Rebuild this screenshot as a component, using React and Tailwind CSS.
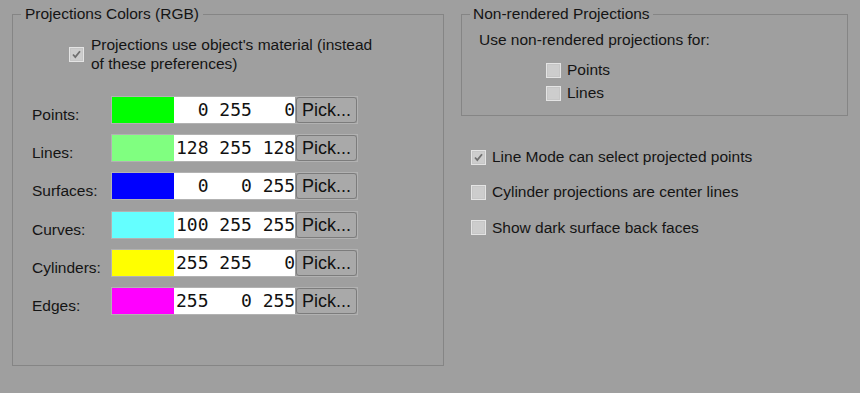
import React from 'react'

const colorRows = [
  { label: 'Points:', swatch: 'bg-[#00ff00]', value: '  0 255   0' },
  { label: 'Lines:', swatch: 'bg-[#80ff80]', value: '128 255 128' },
  { label: 'Surfaces:', swatch: 'bg-[#0000ff]', value: '  0   0 255' },
  { label: 'Curves:', swatch: 'bg-[#64ffff]', value: '100 255 255' },
  { label: 'Cylinders:', swatch: 'bg-[#ffff00]', value: '255 255   0' },
  { label: 'Edges:', swatch: 'bg-[#ff00ff]', value: '255   0 255' },
]

function CheckBox({ checked }) {
  return (
    <span className="flex h-[15px] w-[15px] shrink-0 items-center justify-center border border-[#e4e4e4] bg-[#c6c6c6]">
      <span className="flex h-[11px] w-[11px] items-center justify-center bg-[#cdcdcd]">
        {checked && (
          <svg viewBox="0 0 11 11" className="h-[11px] w-[11px]">
            <path d="M2 5.5 L4.3 8 L9 2.2" fill="none" stroke="#707070" strokeWidth="1.8" />
          </svg>
        )}
      </span>
    </span>
  )
}

function ColorRow({ row }) {
  return (
    <div className="flex h-[28px]">
      <div className="w-[98px] shrink-0 pt-[10px] pl-[19px] leading-[18px] whitespace-nowrap">{row.label}</div>
      <div className="flex border border-[#b2b2b2]">
        <div className={`w-[62px] ${row.swatch}`} />
        <div className="w-[121px] bg-white pl-[2px] font-['DejaVu_Sans_Mono',monospace] text-[18px] leading-[26px] whitespace-pre text-[#111]">
          {row.value}
        </div>
        <button
          type="button"
          className="ml-px w-[61px] rounded-[3px] border border-[#7c7c7c] bg-[#a9a9a9] text-[18px] leading-[22px] text-[#111]"
        >
          Pick...
        </button>
      </div>
    </div>
  )
}

export default function App() {
  return (
    <div className="flex h-[393px] w-[860px] gap-[17px] bg-[#9f9f9f] pl-[12px] font-['Liberation_Sans',Arial,sans-serif] text-[15.5px] text-[#141414]">
      <fieldset className="mt-[5px] h-[361px] w-[432px] border border-[#858585] px-0 pl-[8px]">
        <legend className="px-[4px] leading-[18px]">Projections Colors (RGB)</legend>
        <div className="-ml-[8px] mt-[13px] flex items-center gap-[7px] pl-[56px]">
          <CheckBox checked />
          <div className="leading-[18.5px]">
            Projections use object's material (instead
            <br />
            of these preferences)
          </div>
        </div>
        <div className="-ml-[8px] mt-[23px] flex flex-col gap-[10.2px]">
          {colorRows.map((row) => (
            <ColorRow key={row.label} row={row} />
          ))}
        </div>
      </fieldset>

      <div className="flex flex-col">
        <fieldset className="mt-[5px] h-[111px] w-[387px] border border-[#858585] px-0 pl-[8px]">
          <legend className="px-[3px] leading-[18px]">Non-rendered Projections</legend>
          <div className="-ml-[8px] mt-[8px] pl-[17px] leading-[18.5px]">
            Use non-rendered projections for:
          </div>
          <div className="-ml-[8px] mt-[9px] flex flex-col pl-[84px]">
            <div className="flex h-[23px] items-center gap-[6px]">
              <CheckBox />
              <span>Points</span>
            </div>
            <div className="flex h-[23px] items-center gap-[6px]">
              <CheckBox />
              <span>Lines</span>
            </div>
          </div>
        </fieldset>

        <div className="mt-[32px] flex flex-col gap-[16.8px] pl-[10px] leading-[18.5px]">
          <div className="flex items-center gap-[6px]">
            <CheckBox checked />
            <span>Line Mode can select projected points</span>
          </div>
          <div className="flex items-center gap-[6px]">
            <CheckBox />
            <span>Cylinder projections are center lines</span>
          </div>
          <div className="flex items-center gap-[6px]">
            <CheckBox />
            <span>Show dark surface back faces</span>
          </div>
        </div>
      </div>
    </div>
  )
}
